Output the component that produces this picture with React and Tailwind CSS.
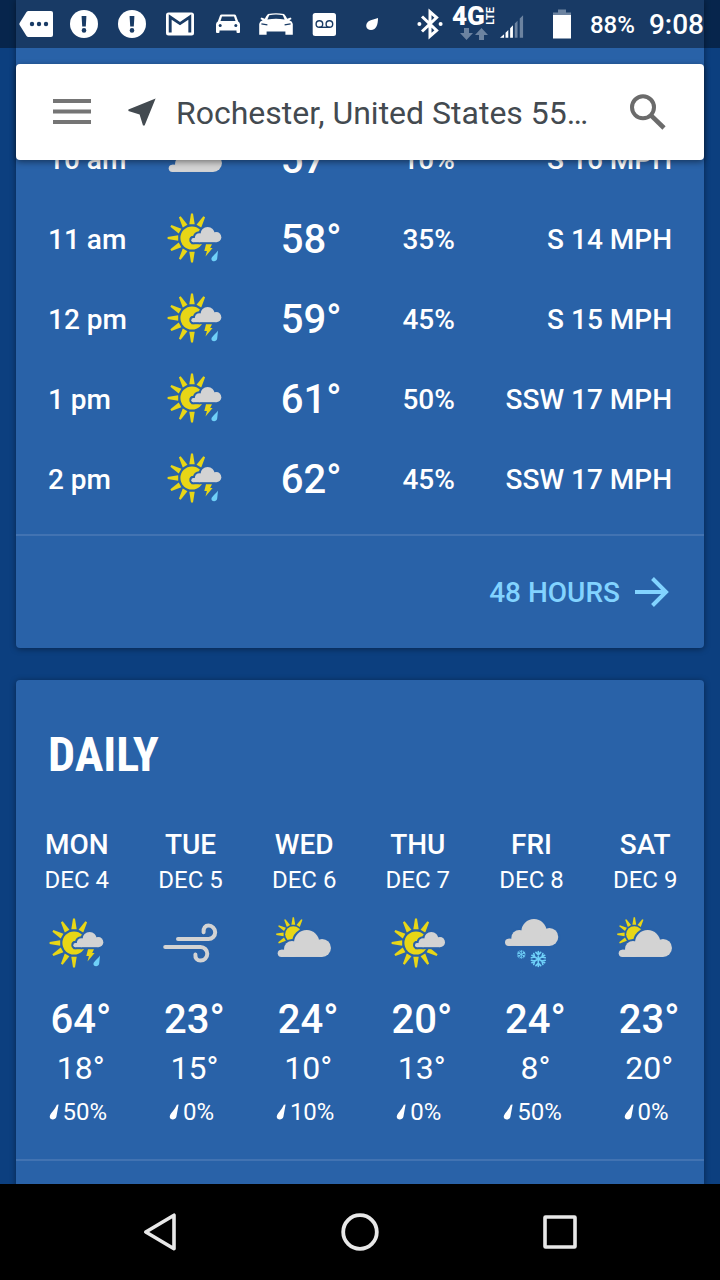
import React from 'react';

const HOURS = [
    { time: '10 am', icon: 'partly', temp: '57°', precip: '10%', wind: 'S 16 MPH' },
    { time: '11 am', icon: 'storm', temp: '58°', precip: '35%', wind: 'S 14 MPH' },
    { time: '12 pm', icon: 'storm', temp: '59°', precip: '45%', wind: 'S 15 MPH' },
    { time: '1 pm', icon: 'storm', temp: '61°', precip: '50%', wind: 'SSW 17 MPH' },
    { time: '2 pm', icon: 'storm', temp: '62°', precip: '45%', wind: 'SSW 17 MPH' },
];

const DAYS = [
    { day: 'MON', date: 'DEC 4', icon: 'storm', high: '64°', low: '18°', precip: '50%' },
    { day: 'TUE', date: 'DEC 5', icon: 'wind', high: '23°', low: '15°', precip: '0%' },
    { day: 'WED', date: 'DEC 6', icon: 'partly', high: '24°', low: '10°', precip: '10%' },
    { day: 'THU', date: 'DEC 7', icon: 'sunny', high: '20°', low: '13°', precip: '0%' },
    { day: 'FRI', date: 'DEC 8', icon: 'snow', high: '24°', low: '8°', precip: '50%' },
    { day: 'SAT', date: 'DEC 9', icon: 'partly', high: '23°', low: '20°', precip: '0%' },
];

const CARD = '#2962a8';
const BAR = '#193b65';
const YELLOW = '#e8d616';

const cloudShapes = (
    <>
        <circle cx="11" cy="70" r="11" />
        <circle cx="43" cy="57" r="24" />
        <circle cx="87" cy="38" r="38" />
        <circle cx="133" cy="54" r="27" />
        <rect x="11" y="59" width="122" height="22" />
    </>
);

// The halo keeps a gap between the cloud and the sun behind it
const Cloud = ({ x, y, scale }) => (
    <g transform={`translate(${x} ${y}) scale(${scale})`}>
        <g fill={CARD} stroke={CARD} strokeWidth={4 / scale}>
            {cloudShapes}
        </g>
        <g fill="#d3d3d3">{cloudShapes}</g>
    </g>
);

const Sun = ({ x, y, scale = 1, rays }) => (
    <g transform={`translate(${x} ${y}) scale(${scale})`} fill={YELLOW}>
        <circle r="11.6" />
        {rays.map((angle) => (
            <path key={angle} d="M-2.7 -13.8L-1 -24.4H1L2.7 -13.8Z" transform={`rotate(${angle})`} />
        ))}
    </g>
);

const Flake = ({ x, y, scale }) => (
    <g
        transform={`translate(${x} ${y}) scale(${scale})`}
        stroke="#6fd0f8"
        strokeWidth="1.6"
        strokeLinecap="round"
        fill="none"
    >
        {[0, 60, 120, 180, 240, 300].map((angle) => (
            <path key={angle} d="M0 0V-7.4M-2.4 -6.6L0 -4.2L2.4 -6.6" transform={`rotate(${angle})`} />
        ))}
    </g>
);

const WeatherIcon = ({ type }) => (
    <svg viewBox="0 0 64 64" className="mx-auto block size-16" aria-hidden="true">
        {type === 'storm' && (
            <>
                <Sun x={29} y={31} rays={[0, 30, 180, 210, 240, 270, 300, 330]} />
                <Cloud x={28.3} y={20} scale={0.1875} />
                <path fill={YELLOW} d="M43 37.2H49L47.2 41H49.6L42.5 49.6L43.9 43.9H41.3Z" />
                <path fill="#6fd0f8" d="M55 43.4L54.2 51.6C53.6 55.4 47.6 54.8 48.5 51.2C49.2 49.2 53 46.6 55 43.4Z" />
            </>
        )}
        {type === 'sunny' && (
            <>
                <Sun x={30} y={31} rays={[0, 30, 120, 150, 180, 210, 240, 270, 300, 330]} />
                <Cloud x={29} y={20} scale={0.1875} />
            </>
        )}
        {type === 'partly' && (
            <>
                <Sun x={21.3} y={22.3} scale={0.7} rays={[0, 30, 240, 270, 300, 330]} />
                <Cloud x={5.7} y={18} scale={0.333} />
            </>
        )}
        {type === 'snow' && (
            <>
                <Cloud x={6} y={7} scale={0.333} />
                <Flake x={22.3} y={42.4} scale={0.54} />
                <Flake x={39.3} y={47} scale={1} />
            </>
        )}
        {type === 'wind' && (
            <g fill="none" stroke="#d3d3d3" strokeWidth="4" strokeLinecap="round">
                <path d="M20 27H50.5A6.7 6.7 0 0 0 50.5 13.6C47.4 13.6 45.2 15.8 45.6 20.2" />
                <path d="M7.2 35H42.5A6.8 6.8 0 0 1 42.5 48.6C39.2 48.6 37 46.2 37.4 42.6" />
            </g>
        )}
    </svg>
);

const StatusIcon = ({ children }) => (
    <svg viewBox="0 0 48 48" className="size-12 shrink-0" fill="#fff" aria-hidden="true">
        {children}
    </svg>
);

const alertIcon = (
    <>
        <circle cx="24" cy="24" r="14" />
        <path fill={BAR} d="M21.6 16H26.4L25.8 26.5H22.2Z" />
        <circle cx="24" cy="30.4" r="2.3" fill={BAR} />
    </>
);

const StatusBar = () => (
    <div className="flex h-12 items-center justify-between bg-black/40 pl-3 pr-4 text-white">
        <div className="flex">
            <StatusIcon>
                <path d="M16.5 11H39Q41 11 41 13V35Q41 37 39 37H16.5Q15.3 37 14.5 36L7.6 25Q7 24 7.6 23L14.5 12Q15.3 11 16.5 11Z" />
                <circle cx="20" cy="24" r="2.2" fill={BAR} />
                <circle cx="27" cy="24" r="2.2" fill={BAR} />
                <circle cx="34" cy="24" r="2.2" fill={BAR} />
            </StatusIcon>
            <StatusIcon>{alertIcon}</StatusIcon>
            <StatusIcon>{alertIcon}</StatusIcon>
            <StatusIcon>
                <rect x="10" y="12.5" width="28" height="23" rx="2.5" />
                <path d="M14.2 32.5V17L24 23.6L33.8 17V32.5" fill="none" stroke={BAR} strokeWidth="2.9" />
            </StatusIcon>
            <StatusIcon>
                <path d="M17.5 14.5H30.5Q31.5 14.5 32 15.5L34.2 21.5Q36 22.5 36 24.5V32Q36 33 35 33H33.5Q32.5 33 32.5 32V30.5H15.5V32Q15.5 33 14.5 33H13Q12 33 12 32V24.5Q12 22.5 13.8 21.5L16 15.5Q16.5 14.5 17.5 14.5Z" />
                <path fill={BAR} d="M18 16.5H30L31.5 21H16.5Z" />
                <circle cx="16.2" cy="25.6" r="1.5" fill={BAR} />
                <circle cx="31.8" cy="25.6" r="1.5" fill={BAR} />
            </StatusIcon>
            <StatusIcon>
                <path d="M16 14Q24 12.4 32 14Q34 16 35.2 18.8L38.6 17.6L39.6 19L37.4 20.2Q40.6 21.4 40.8 24V34.8H33.4V31.6H14.6V34.8H7.2V24Q7.4 21.4 10.6 20.2L8.4 19L9.4 17.6L12.8 18.8Q14 16 16 14Z" />
                <path fill={BAR} d="M17.2 15.2Q24 14 30.8 15.2L32.6 19.4Q24 18.2 15.4 19.4Z" />
                <path stroke={BAR} strokeWidth="1.2" d="M9.4 23.8L15.4 24.8M38.6 23.8L32.6 24.8" />
            </StatusIcon>
            <StatusIcon>
                <rect x="12.7" y="13" width="23.3" height="23" rx="2.5" />
                <g fill="none" stroke={BAR} strokeWidth="1.4">
                    <circle cx="19.4" cy="24" r="3.3" />
                    <circle cx="29.4" cy="24" r="3.3" />
                    <path d="M19.4 27.3H29.4" />
                </g>
            </StatusIcon>
            <StatusIcon>
                <path d="M30 18C30 24 28.6 30 23 30C17.6 30 16.8 24 20.6 21.2C23.2 19.4 27 19.4 30 18Z" />
            </StatusIcon>
        </div>
        <div className="flex items-center">
            <svg viewBox="0 0 28 32" className="mr-2 h-8 w-7" aria-hidden="true">
                <path d="M6 8.5L20.6 22.4L14 28.2V3.8L20.6 9.6L6 23.5" fill="none" stroke="#fff" strokeWidth="3" />
                <circle cx="3.4" cy="16" r="2" fill="#fff" />
                <circle cx="24.6" cy="16" r="2" fill="#fff" />
            </svg>
            <div className="flex w-12 flex-col pb-1">
                <div className="flex h-6 items-center">
                    <span className="text-[26px] leading-6 font-black">4G</span>
                    <span className="rotate-180 text-[11px] leading-3 font-bold [writing-mode:vertical-rl]">LTE</span>
                </div>
                <svg viewBox="0 0 48 12" className="h-3 w-12" fill="#6c83a0" aria-hidden="true">
                    <path d="M12 0H17V5H21L14.5 12L8 5H12Z" />
                    <path d="M27 12H32V7H36L29.5 0L23 7H27Z" />
                </svg>
            </div>
            <svg viewBox="0 0 26 48" className="mr-7 h-12 w-6" aria-hidden="true">
                <path fill="#fff" d="M0 39L4.4 35V39ZM6 33.4L9 30.4V39H6ZM11 28.6L14 25.4V39H11Z" />
                <path fill="#6c83a0" d="M16 23.4L19 20.4V39H16ZM21.4 18L25 14.6V39H21.4Z" />
            </svg>
            <svg viewBox="0 0 20 30" className="mr-4.5 h-[30px] w-5" aria-hidden="true">
                <path fill="#6c83a0" d="M6 0.5H14V3.5H19V7H1V3.5H6Z" />
                <rect x="1" y="6" width="18" height="23.5" fill="#fff" />
            </svg>
            <span className="mr-3.5 pt-0.5 text-2xl font-medium">88%</span>
            <span className="pt-0.5 text-[28px] font-medium">9:08</span>
        </div>
    </div>
);

const SearchBar = () => (
    <div className="mx-4 mt-4 flex h-24 items-center rounded bg-white pl-8 pr-8 shadow-[0_2px_6px_rgba(0,0,0,0.45)]">
        <button type="button" aria-label="Menu" className="mr-8">
            <svg viewBox="0 0 48 48" className="size-12" fill="#757575" aria-hidden="true">
                <path d="M5 11H43V15H5ZM5 21.5H43V25.5H5ZM5 32H43V36H5Z" />
            </svg>
        </button>
        <button type="button" className="flex min-w-0 flex-1 items-center text-left text-[32px] text-[#434a50]">
            <svg viewBox="0 0 28 28" className="mr-5 size-7 shrink-0" fill="#434a50" aria-hidden="true">
                <path d="M27.6 0.6L16.6 27.4H15L11.6 16.4L0.4 13V11.6Z" />
            </svg>
            <span className="truncate pt-0.5">Rochester, United States 55…</span>
        </button>
        <button type="button" aria-label="Search">
            <svg viewBox="0 0 48 48" className="size-12" fill="none" stroke="#6b6b6b" aria-hidden="true">
                <circle cx="19" cy="19.3" r="11" strokeWidth="4" />
                <path d="M27 27.3L40 40" strokeWidth="4.6" />
            </svg>
        </button>
    </div>
);

const HourlyCard = () => (
    <section className="rounded-b bg-[#2962a8] shadow-[0_1px_6px_rgba(0,0,0,0.4)]">
        <div className="px-8 pt-[119px] pb-[15px]">
            <table className="w-full table-fixed text-[28px] font-medium">
                <colgroup>
                    <col className="w-[16%]" />
                    <col className="w-[15%]" />
                    <col className="w-[22%]" />
                    <col className="w-[16%]" />
                    <col className="w-[31%]" />
                </colgroup>
                <tbody>
                    {HOURS.map((hour) => (
                        <tr key={hour.time} className="h-20">
                            <td className="p-0 pt-0.5 whitespace-nowrap">{hour.time}</td>
                            <td className="p-0">
                                <WeatherIcon type={hour.icon} />
                            </td>
                            <td className="p-0 pt-0.5 pl-0.5 text-center text-[40px] leading-12">{hour.temp}</td>
                            <td className="p-0 pt-0.5 text-center">{hour.precip}</td>
                            <td className="p-0 pt-0.5 text-right whitespace-nowrap">{hour.wind}</td>
                        </tr>
                    ))}
                </tbody>
            </table>
        </div>
        <div className="flex h-[114px] items-center justify-end border-t-2 border-[#4273b2] px-8">
            <a href="#hours" className="flex items-center gap-3 text-[28px] font-medium text-[#82d3ff]">
                <span className="pt-0.5">48 HOURS</span>
                <svg viewBox="0 0 40 40" className="size-10" fill="none" stroke="#82d3ff" strokeWidth="4" aria-hidden="true">
                    <path d="M3 20H34M20.5 6.5L34 20L20.5 33.5" />
                </svg>
            </a>
        </div>
    </section>
);

const DailyCard = () => (
    <section className="mt-8 rounded-t bg-[#2962a8] pt-[51px] shadow-[0_1px_6px_rgba(0,0,0,0.4)]">
        <h2 className="px-8 font-['Roboto_Condensed','Roboto',sans-serif] text-5xl leading-12 font-bold">DAILY</h2>
        <div className="mt-12 grid grid-cols-6 pr-0.5 pb-[27px] pl-1 text-center">
            {DAYS.map((day) => (
                <div key={day.day}>
                    <div className="text-[28px] leading-9 font-medium">{day.day}</div>
                    <div className="text-2xl leading-[34px]">{day.date}</div>
                    <div className="mt-[15px]">
                        <WeatherIcon type={day.icon} />
                    </div>
                    <div className="mt-5 pl-2 text-[40px] leading-12 font-medium">{day.high}</div>
                    <div className="pl-2 text-[32px] leading-12">{day.low}</div>
                    <div className="flex items-center justify-center gap-1 pl-0.5 text-2xl leading-10">
                        <svg viewBox="0 0 10 16" className="h-4 w-2.5" fill="#fff" aria-hidden="true">
                            <path d="M9.6 0.4L7.4 12.8C6.4 16.8 0 16.2 0.8 12.2C1.4 9.4 6 5.6 7.8 0.8Z" />
                        </svg>
                        {day.precip}
                    </div>
                </div>
            ))}
        </div>
        <div className="h-28 border-t-2 border-[#4273b2]" />
    </section>
);

const NavBar = () => (
    <nav className="grid h-24 shrink-0 grid-cols-3 items-center bg-black px-15">
        <button type="button" aria-label="Back" className="mx-auto">
            <svg viewBox="0 0 48 48" className="size-12" fill="none" stroke="#e8e8e8" strokeWidth="3.6" aria-hidden="true">
                <path d="M9.8 24L38 7.2V40.8Z" strokeLinejoin="round" />
            </svg>
        </button>
        <button type="button" aria-label="Home" className="mx-auto">
            <svg viewBox="0 0 48 48" className="size-12" fill="none" stroke="#e8e8e8" strokeWidth="3.8" aria-hidden="true">
                <circle cx="24" cy="24" r="16.8" />
            </svg>
        </button>
        <button type="button" aria-label="Recent apps" className="mx-auto">
            <svg viewBox="0 0 48 48" className="size-12" fill="none" stroke="#e8e8e8" strokeWidth="3.6" aria-hidden="true">
                <rect x="9" y="9" width="30" height="30" rx="0.6" />
            </svg>
        </button>
    </nav>
);

const App = () => {
    return (
        <div className="relative flex h-screen flex-col bg-[#0c3f7f] font-['Roboto',sans-serif] text-white">
            <header className="absolute inset-x-0 top-0 z-10">
                <StatusBar />
                <SearchBar />
            </header>
            <main className="min-h-0 flex-1 overflow-hidden px-4">
                <HourlyCard />
                <DailyCard />
            </main>
            <NavBar />
        </div>
    );
};

export default App;
